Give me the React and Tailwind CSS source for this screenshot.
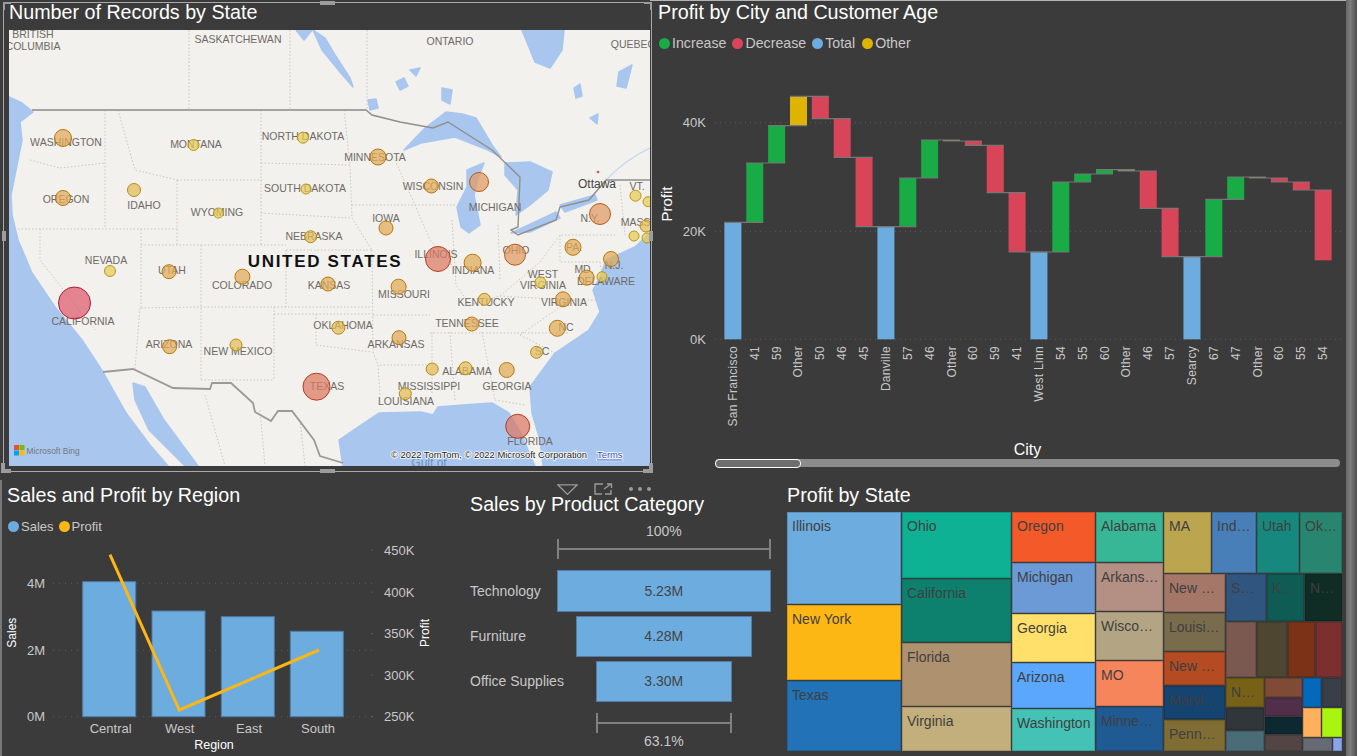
import React from 'react';

const waterfall = [
  ['San Francisco', 'total', 222.3],
  ['41', 'up', 163],
  ['59', 'up', 125.7],
  ['Other', 'other', 96.3],
  ['50', 'down', 118.7],
  ['46', 'down', 157.3],
  ['45', 'down', 226.7],
  ['Danville', 'total', 226.7],
  ['57', 'up', 178],
  ['46', 'up', 140],
  ['Other', 'tiny', 141],
  ['60', 'down', 145.3],
  ['59', 'down', 192.7],
  ['41', 'down', 252],
  ['West Linn', 'total', 252],
  ['54', 'up', 182],
  ['55', 'up', 174],
  ['60', 'up', 169.7],
  ['Other', 'tiny', 171],
  ['46', 'down', 208.3],
  ['57', 'down', 256.7],
  ['Searcy', 'total', 256.7],
  ['67', 'up', 199.3],
  ['47', 'up', 177],
  ['Other', 'tiny', 178],
  ['60', 'down', 182],
  ['55', 'down', 190],
  ['54', 'down', 260.3],
];

const barFill = {
  total: '#6cacdf',
  up: '#19ab45',
  down: '#d94558',
  other: '#dfb400',
  tiny: '#b5a45c',
};

const mapLabels = [
  ['BRITISH', 33, 34], ['COLUMBIA', 33, 46], ['SASKATCHEWAN', 238, 39], ['ONTARIO', 450, 41], ['QUEBEC', 633, 44],
  ['WASHINGTON', 66, 142], ['MONTANA', 196, 144], ['NORTH DAKOTA', 303, 136], ['MINNESOTA', 375, 157],
  ['WISCONSIN', 433, 186], ['MICHIGAN', 495, 207], ['VT.', 637, 186], ['N.Y.', 590, 218], ['MASS.', 637, 222],
  ['OREGON', 66, 199], ['IDAHO', 144, 205], ['WYOMING', 217, 212], ['SOUTH DAKOTA', 305, 188], ['IOWA', 386, 218],
  ['NEBRASKA', 314, 236], ['NEVADA', 106, 260], ['UTAH', 172, 270], ['COLORADO', 242, 285], ['KANSAS', 329, 285],
  ['MISSOURI', 404, 294], ['ILLINOIS', 436, 254], ['INDIANA', 473, 270], ['OHIO', 516, 250], ['PA.', 574, 247],
  ['N.J.', 614, 265], ['MD.', 584, 269], ['WEST', 543, 274], ['VIRGINIA', 543, 285], ['DELAWARE', 606, 281],
  ['KENTUCKY', 486, 302], ['VIRGINIA', 564, 302], ['CALIFORNIA', 83, 321], ['OKLAHOMA', 343, 325],
  ['TENNESSEE', 467, 323], ['NC', 566, 327], ['ARKANSAS', 396, 344], ['ARIZONA', 169, 344], ['NEW MEXICO', 238, 351],
  ['SC', 542, 351], ['ALABAMA', 467, 371], ['GEORGIA', 507, 386], ['MISSISSIPPI', 429, 386], ['TEXAS', 327, 386],
  ['LOUISIANA', 406, 401], ['FLORIDA', 530, 441],
];

const bubbles = [
  [63, 138, 8.5], [193.6, 145, 5.5], [303, 137.7, 5.5], [378, 157, 8], [431.4, 186, 7], [479, 182, 9.5],
  [600, 214, 10.5], [635.5, 195.7, 5.5], [648, 201.7, 5], [646, 226, 6], [634, 236, 5], [647, 238, 5],
  [63, 198, 7.5], [134, 190, 6.5], [218.4, 213, 5], [306, 189, 5], [386, 228, 7], [310.6, 236.7, 6],
  [110, 271, 5.5], [169, 271.7, 7], [242.4, 276.7, 7.5], [328, 284, 7], [398.6, 286.7, 7.5], [438, 259, 12.5],
  [472.6, 262.7, 8.5], [515, 254.7, 10.5], [573, 247.3, 8], [611, 259, 7.5], [540.4, 282.3, 5.5], [586.7, 277.7, 7.5],
  [602, 276.7, 5], [484.4, 299.3, 6], [563, 299.3, 7.5], [74.5, 303, 16], [338.4, 327.7, 6.5], [471.8, 324, 7],
  [557.3, 328.3, 8], [399, 337.7, 7], [236, 345, 6], [169.6, 346.7, 7], [536.6, 352.3, 6], [432.2, 369, 6],
  [465.5, 368.3, 6.5], [506.7, 370, 7.5], [316.5, 386.7, 13.5], [405.3, 393.7, 6], [517.7, 426.3, 12],
];

const bubbleColor = (r) => {
  if (r >= 15) return ['#dc5a6c', '#ae1a3a'];
  if (r >= 12) return ['#dd7a62', '#b43c1c'];
  if (r >= 9) return ['#e09a64', '#b65c12'];
  if (r >= 7) return ['#e2ab58', '#b5780c'];
  if (r >= 6) return ['#e2bc58', '#b98a12'];
  return ['#e6cb56', '#ba9814'];
};

const stateLines = [
  'M189 30V110', 'M290 30V110', 'M367 30V110', 'M105 110V229', 'M118 110L135 170L177 180', 'M30 160L60 168L105 163',
  'M18 229H177', 'M177 180H262', 'M177 180V245', 'M261 110V245', 'M261 163L350 165', 'M261 213L350 218', 'M344 110L350 165L352 218L372 250',
  'M141 229V308', 'M141 245H201', 'M201 245H286', 'M201 245V380', 'M286 250V307', 'M286 250H372', 'M141 308L201 307H372', 'M140 308L135 369',
  'M274 307V380', 'M201 380H274', 'M274 314H372', 'M316 314V345L372 352', 'M372 250L373 352', 'M352 205H415', 'M395 160L415 205L430 240L452 265',
  'M415 205H455', 'M452 220L456 285L470 305', 'M498 225L500 280', 'M373 315H430', 'M373 352L378 365L380 395', 'M380 365H428', 'M432 332V395',
  'M450 332L455 400', 'M482 332L495 400', 'M430 333H570', 'M470 305L500 296L540 262', 'M540 262L560 235H615', 'M500 296L570 300H600', 'M495 400L525 405',
  'M520 335L555 353', 'M570 300L520 335', 'M40 229L40 260L95 330', 'M560 235V262H600', 'M620 185L625 235', 'M600 262L604 285',
  'M205 395L225 466', 'M260 410L265 466', 'M300 420L305 466',
];

const mapWater = [
  '9,97 22,103 33,112 20,122 22,140 17,165 11,195 12,215 18,240 32,273 55,307 82,340 103,372 126,413 150,445 168,466 9,466',
  '133,383 145,387 164,420 198,466 185,466 149,430 135,400',
  '343,466 339,440 358,427 379,413 421,412 433,415 438,407 463,405 492,403 509,413 522,435 530,455 535,466',
  '543,466 540,440 532,413 530,387 555,353 589,330 600,312 593,290 600,277 606,260 635,247 650,233 650,466',
  '404,150 425,128 446,112 462,114 476,118 492,145 501,157 488,150 455,137 421,143',
  '467,170 484,163 478,178 474,195 480,225 469,233 461,227 457,207 467,187',
  '505,163 530,162 552,172 548,190 530,205 516,215 518,190 505,175',
  '511,233 535,222 556,212 560,218 530,232',
  '560,205 595,195 597,200 565,212',
  '313,30 325,38 335,55 350,78 353,87 340,72 322,50',
  '522,30 564,30 562,50 550,68 535,62',
  '442,88 452,90 450,104 442,100',
  '396,82 404,78 408,86 400,90',
  '410,70 420,68 416,76',
  '619,72 632,65 626,88 617,86',
  '296,30 312,30 304,40',
  '368,100 376,99 378,108 370,110',
  '590,118 598,114 597,124',
  '574,88 580,84 582,96 576,98',
];

const treeColumns = [
  {
    width: 'w-[114px]',
    cells: [
      { label: 'Illinois', c: 'h-[92px] bg-[#6cacdf]' },
      { label: 'New York', c: 'h-[75px] bg-[#fdb714]' },
      { label: 'Texas', c: 'h-[70px] bg-[#2272b8]' },
    ],
  },
  {
    width: 'w-[109px]',
    cells: [
      { label: 'Ohio', c: 'h-[66px] bg-[#0eb194]' },
      { label: 'California', c: 'h-[63px] bg-[#0e806e]' },
      { label: 'Florida', c: 'h-[63px] bg-[#ae916f]' },
      { label: 'Virginia', c: 'h-[44px] bg-[#c2af7c]' },
    ],
  },
  {
    width: 'w-[83px]',
    cells: [
      { label: 'Oregon', c: 'h-[50px] bg-[#f4592a]' },
      { label: 'Michigan', c: 'h-[50px] bg-[#6b9ad6]' },
      { label: 'Georgia', c: 'h-[48px] bg-[#ffe06a]' },
      { label: 'Arizona', c: 'h-[45px] bg-[#5ba7fe]' },
      { label: 'Washington', c: 'h-[42px] bg-[#44c2b5]' },
    ],
  },
  {
    width: 'w-[67px]',
    cells: [
      { label: 'Alabama', c: 'h-[50px] bg-[#37b796]' },
      { label: 'Arkans…', c: 'h-[48px] bg-[#b38f84]' },
      { label: 'Wisco…', c: 'h-[48px] bg-[#b3a583]' },
      { label: 'MO', c: 'h-[45px] bg-[#f6855c]' },
      { label: 'Minne…', c: 'h-[44px] bg-[#1f5a93]' },
    ],
  },
];

const TreeCell = ({ label, c }) => (
  <div className={`border border-black/15 pl-[4px] pt-[4px] text-[14px] leading-[18px] text-[#3f3f3f] overflow-hidden whitespace-nowrap ${c}`}>
    {label}
  </div>
);

const Title = ({ children, className = '' }) => (
  <div className={`text-[19.7px] text-white whitespace-nowrap ${className}`}>{children}</div>
);

const LegendItem = ({ color, label, className = '' }) => (
  <div className={`flex items-center gap-[2px] ${className}`}>
    <span className={`w-[11px] h-[11px] rounded-full ${color}`} />
    <span>{label}</span>
  </div>
);

const Handle = ({ className }) => <div className={`absolute bg-[#9c9c9c] ${className}`} />;

const MapChart = () => (
  <svg width="641" height="436" viewBox="9 30 641 436" className="block">
    <rect x="9" y="30" width="641" height="436" fill="#f2f1ed" />
    {mapWater.map((pts) => (
      <polygon key={pts} points={pts} fill="#a9c6ef" stroke="#a9c6ef" strokeWidth="1.5" strokeLinejoin="round" />
    ))}
    <path d="M606 180C620 165 635 155 650 148" stroke="#c6d6ee" strokeWidth="1.2" fill="none" />
    {stateLines.map((d) => (
      <path key={d} d={d} stroke="#c9c7c1" strokeWidth="1" strokeDasharray="1.5 2" fill="none" />
    ))}
    <path d="M32 110H366L372 115L400 122L433 128L448 122L492 150L520 177L518 227L511 230L518 235L556 220L560 207L589 200L606 180H650" stroke="#8f8f8d" strokeWidth="1.4" fill="none" />
    <path d="M32 110H366" stroke="#a3a3a1" strokeWidth="2" fill="none" />
    <path d="M103 372L133 369L173 388L210 389L212 383L231 383L253 403L255 412L271 421L278 411L292 411L314 440L320 456L343 463" stroke="#9a9a97" strokeWidth="1.8" fill="none" />
    {mapLabels.map(([text, x, y]) => (
      <text key={`${text}-${x}`} x={x} y={y} textAnchor="middle" dominantBaseline="central" className="fill-[#6f6a67] text-[10.5px]">
        {text}
      </text>
    ))}
    <text x="597" y="184" textAnchor="middle" dominantBaseline="central" className="fill-[#444444] text-[12px]">Ottawa</text>
    <circle cx="598" cy="172" r="1.3" fill="#e0503c" />
    <text x="429" y="463" textAnchor="middle" dominantBaseline="central" className="fill-[#6f8fc0] text-[12px]">Gulf of</text>
    <text x="325" y="261" textAnchor="middle" dominantBaseline="central" className="fill-[#111111] text-[17px] font-bold tracking-[1.7px]">UNITED STATES</text>
    {bubbles.map(([cx, cy, r]) => {
      const [fill, stroke] = bubbleColor(r);
      return <circle key={`${cx}-${cy}`} cx={cx} cy={cy} r={r} fill={fill} fillOpacity="0.72" stroke={stroke} strokeWidth="1" />;
    })}
    <rect x="14" y="445" width="5" height="5" fill="#f25022" />
    <rect x="19.5" y="445" width="5" height="5" fill="#7fba00" />
    <rect x="14" y="450.5" width="5" height="5" fill="#00a4ef" />
    <rect x="19.5" y="450.5" width="5" height="5" fill="#ffb900" />
    <text x="26.5" y="450.5" dominantBaseline="central" className="fill-[#777777] text-[8.4px]">Microsoft Bing</text>
    <text x="391" y="454" dominantBaseline="central" stroke="#ffffff" strokeWidth="1.5" paintOrder="stroke" className="fill-[#222222] text-[9.4px]">
      © 2022 TomTom, © 2022 Microsoft Corporation
    </text>
    <text x="597" y="454" dominantBaseline="central" stroke="#ffffff" strokeWidth="1.5" paintOrder="stroke" className="fill-[#2f4fc0] text-[9.4px] underline">
      Terms
    </text>
  </svg>
);

const WaterfallChart = () => {
  const barX = (i) => 724.4 + i * 21.86;
  return (
    <svg width="702" height="384" viewBox="655 56 702 384" className="block">
      {[[122.7, '40K'], [231.3, '20K'], [339.3, '0K']].map(([y, t]) => (
        <g key={t}>
          <line x1="715" x2="1342" y1={y} y2={y} stroke="#5c5c5c" strokeDasharray="1 4" />
          <text x="706" y={y} textAnchor="end" dominantBaseline="central" className="fill-[#c8c8c8] text-[13px]">{t}</text>
        </g>
      ))}
      {waterfall.map(([, kind, end], i) => {
        const start = kind === 'total' ? 339.3 : waterfall[i - 1][2];
        return (
          <rect key={i} x={barX(i)} y={Math.min(start, end)} width="17" height={Math.abs(start - end)} fill={barFill[kind]} />
        );
      })}
      {waterfall.slice(0, -1).map(([, , end], i) => (
        <line key={i} x1={barX(i)} x2={barX(i + 1) + 17} y1={end} y2={end} stroke="#777777" strokeWidth="1.2" />
      ))}
      {waterfall.map(([label], i) => {
        const cx = barX(i) + 8.5;
        return (
          <text key={i} x={cx} y="346" transform={`rotate(-90 ${cx} 346)`} textAnchor="end" dominantBaseline="central" className="fill-[#c8c8c8] text-[12px] tracking-[0.3px]">
            {label}
          </text>
        );
      })}
      <text x="666" y="204" transform="rotate(-90 666 204)" textAnchor="middle" dominantBaseline="central" className="fill-white text-[15px]">Profit</text>
    </svg>
  );
};

const ComboChart = () => (
  <svg width="460" height="220" viewBox="0 536 460 220" className="block">
    {[583.3, 650.3, 716.7].map((y) => (
      <line key={y} x1="53" x2="372" y1={y} y2={y} stroke="#5c5c5c" strokeDasharray="1 5" />
    ))}
    {[['4M', 583.3], ['2M', 650.3], ['0M', 716.7]].map(([t, y]) => (
      <text key={t} x="45" y={y} textAnchor="end" dominantBaseline="central" className="fill-[#c8c8c8] text-[13px]">{t}</text>
    ))}
    {[['450K', 550], ['400K', 592], ['350K', 633.7], ['300K', 675], ['250K', 716.7]].map(([t, y]) => (
      <g key={t}>
        <circle cx="372" cy={y} r="0.6" fill="#777777" />
        <text x="384" y={y} dominantBaseline="central" className="fill-[#c8c8c8] text-[13px]">{t}</text>
      </g>
    ))}
    {[[82.7, 581.7], [152, 611], [221.3, 616.7], [290.3, 631.3]].map(([x, y]) => (
      <rect key={x} x={x} y={y} width="53" height={716.7 - y} fill="#6cacdf" stroke="#4f7da5" />
    ))}
    <polyline points="110,554.7 179.3,710 319,650" fill="none" stroke="#fdb714" strokeWidth="3" />
    {[['Central', 110.7], ['West', 179.7], ['East', 249], ['South', 318]].map(([t, x]) => (
      <text key={t} x={x} y="728" textAnchor="middle" dominantBaseline="central" className="fill-[#c8c8c8] text-[13px]">{t}</text>
    ))}
    <text x="214" y="744.5" textAnchor="middle" dominantBaseline="central" className="fill-white text-[12.5px]">Region</text>
    <text x="12.5" y="632.7" transform="rotate(-90 12.5 632.7)" textAnchor="middle" dominantBaseline="central" className="fill-white text-[12px]">Sales</text>
    <text x="425" y="633" transform="rotate(-90 425 633)" textAnchor="middle" dominantBaseline="central" className="fill-white text-[12px]">Profit</text>
  </svg>
);

const FunnelRow = ({ label, value, bar }) => (
  <div className="flex items-stretch">
    <div className="w-[86.7px] flex items-center text-[14px] text-[#c8c8c8] whitespace-nowrap">{label}</div>
    <div className="w-[214.3px] flex justify-center">
      <div className={`flex items-center justify-center border border-[#4f7da5] bg-[#6cacdf] text-[14px] text-[#444444] ${bar}`}>{value}</div>
    </div>
  </div>
);

const Bracket = ({ className }) => (
  <div className={`h-[20px] flex items-center border-x-2 border-[#808080] ${className}`}>
    <div className="h-[2px] w-full bg-[#808080]" />
  </div>
);

const SliceCell = ({ w, h, bg, label }) => (
  <div className={`${w} ${h} ${bg} border border-black/15 pl-[4px] pt-[4px] text-[14px] leading-[18px] text-[#3f3f3f] overflow-hidden whitespace-nowrap`}>
    {label}
  </div>
);

const Treemap = () => (
  <div className="flex gap-px h-[239px] w-[555px] ml-[7px]">
    {treeColumns.map((col) => (
      <div key={col.width} className={`flex flex-col gap-px ${col.width}`}>
        {col.cells.map((cell) => (
          <TreeCell key={cell.label} {...cell} />
        ))}
      </div>
    ))}
    <div className="w-[178px] flex flex-col gap-px">
      <div className="flex gap-px h-[61px]">
        <SliceCell w="w-[47px]" h="h-[61px]" bg="bg-[#bba64f]" label="MA" />
        <SliceCell w="w-[44px]" h="h-[61px]" bg="bg-[#487fb8]" label="Ind…" />
        <SliceCell w="w-[42px]" h="h-[61px]" bg="bg-[#17887d]" label="Utah" />
        <SliceCell w="w-[42px]" h="h-[61px]" bg="bg-[#288670]" label="Ok…" />
      </div>
      <div className="flex gap-px h-[177px]">
        <div className="w-[61px] flex flex-col gap-px">
          <SliceCell w="w-full" h="h-[38px]" bg="bg-[#a57768]" label="New …" />
          <SliceCell w="w-full" h="h-[38px]" bg="bg-[#796c4d]" label="Louisi…" />
          <SliceCell w="w-full" h="h-[33px]" bg="bg-[#b54b22]" label="New …" />
          <SliceCell w="w-full" h="h-[33px]" bg="bg-[#14446f]" label="Maryl…" />
          <SliceCell w="w-full" h="h-[31px]" bg="bg-[#7f6d34]" label="Penn…" />
        </div>
        <div className="w-[116px] flex flex-col gap-px">
          <div className="flex gap-px h-[47px]">
            <SliceCell w="w-[40px]" h="h-[47px]" bg="bg-[#305680]" label="S…" />
            <SliceCell w="w-[37px]" h="h-[47px]" bg="bg-[#0f5c54]" label="K…" />
            <SliceCell w="w-[37px]" h="h-[47px]" bg="bg-[#0f2c25]" label="N…" />
          </div>
          <div className="flex gap-px h-[55px]">
            <SliceCell w="w-[30px]" h="h-[55px]" bg="bg-[#7a5a50]" />
            <SliceCell w="w-[30px]" h="h-[55px]" bg="bg-[#4e4631]" />
            <SliceCell w="w-[27px]" h="h-[55px]" bg="bg-[#7a3316]" />
            <SliceCell w="w-[26px]" h="h-[55px]" bg="bg-[#7c2f2f]" />
          </div>
          <div className="flex gap-px h-[73px]">
            <div className="w-[38px] flex flex-col gap-px">
              <SliceCell w="w-full" h="h-[29px]" bg="bg-[#766117]" label="N…" />
              <SliceCell w="w-full" h="h-[22px]" bg="bg-[#30363a]" />
              <SliceCell w="w-full" h="h-[20px]" bg="bg-[#4a6c77]" />
            </div>
            <div className="w-[37px] flex flex-col gap-px">
              <SliceCell w="w-full" h="h-[19px]" bg="bg-[#7f4a36]" />
              <SliceCell w="w-full" h="h-[18px]" bg="bg-[#512f4a]" />
              <SliceCell w="w-full" h="h-[17px]" bg="bg-[#0c2830]" />
              <SliceCell w="w-full" h="h-[16px]" bg="bg-[#544545]" />
            </div>
            <div className="w-[39px] flex flex-col gap-px">
              <div className="flex gap-px h-[29px]">
                <SliceCell w="w-[18px]" h="h-[29px]" bg="bg-[#0468bb]" />
                <SliceCell w="w-[20px]" h="h-[29px]" bg="bg-[#393e48]" />
              </div>
              <div className="flex gap-px h-[29px]">
                <SliceCell w="w-[18px]" h="h-[29px]" bg="bg-[#ffb05c]" />
                <SliceCell w="w-[20px]" h="h-[29px]" bg="bg-[#a9f50f]" />
              </div>
              <div className="flex gap-px h-[13px]">
                <SliceCell w="w-[29px]" h="h-[13px]" bg="bg-[#666a73]" />
                <SliceCell w="w-[9px]" h="h-[13px]" bg="bg-[#89a4ea]" />
              </div>
            </div>
          </div>
        </div>
      </div>
    </div>
  </div>
);

const App = () => (
  <div className="relative w-[1357px] h-[756px] overflow-hidden bg-[#3b3b3b] font-['Liberation_Sans',Arial,sans-serif]">
    <div className="flex h-[480px]">
      {/* map visual, selected */}
      <div className="w-[655px] pl-[3px] pt-[2px]">
        <div className="relative w-[649px] h-[470px] border border-[#a9a9a9] pl-[5px]">
          <Handle className="left-[-1px] top-[-1px] w-[8px] h-[2px]" />
          <Handle className="left-[-1px] top-[-1px] w-[2px] h-[8px]" />
          <Handle className="right-[-1px] top-[-1px] w-[8px] h-[2px]" />
          <Handle className="right-[-1px] top-[-1px] w-[2px] h-[8px]" />
          <Handle className="left-[-3px] bottom-[-2px] w-[10px] h-[4px]" />
          <Handle className="left-[-3px] bottom-[-2px] w-[4px] h-[10px]" />
          <Handle className="right-[-2px] bottom-[-2px] w-[10px] h-[4px]" />
          <Handle className="right-[-2px] bottom-[-2px] w-[4px] h-[10px]" />
          <Handle className="left-[316px] top-[-2px] w-[15px] h-[4px]" />
          <Handle className="left-[316px] bottom-[-2px] w-[15px] h-[4px]" />
          <Handle className="left-[-2px] top-[228px] w-[4px] h-[10px]" />
          <Handle className="right-[-2px] top-[228px] w-[4px] h-[10px]" />
          <Title className="h-[27px] leading-[18px]">Number of Records by State</Title>
          <MapChart />
        </div>
      </div>

      {/* waterfall */}
      <div className="w-[702px]">
        <Title className="h-[30px] leading-[24px] pl-[3px]">Profit by City and Customer Age</Title>
        <div className="flex h-[26px] items-center pl-[4px] pt-[2px] text-[14.2px] text-[#c8c8c8]">
          <LegendItem color="bg-[#19ab45]" label="Increase" className="mr-[6px]" />
          <LegendItem color="bg-[#d94558]" label="Decrease" className="mr-[6px]" />
          <LegendItem color="bg-[#6cacdf]" label="Total" className="mr-[7px]" />
          <LegendItem color="bg-[#dfb400]" label="Other" />
        </div>
        <WaterfallChart />
        <div className="w-[745px] h-[19px] text-center text-[16px] leading-[19px] text-white">City</div>
        <div className="ml-[60px] w-[625px] h-[8px] rounded-[4px] bg-[#8c8c8c]">
          <div className="w-[86px] h-[9px] rounded-[4px] border border-white bg-[#6e6e6e]" />
        </div>
      </div>
    </div>

    <div className="flex h-[276px]">
      <div className="w-[460px] border-l-2 border-[#777777]">
        <Title className="h-[37px] leading-[24px] pl-[5px] pt-[3px]">Sales and Profit by Region</Title>
        <div className="flex h-[19px] items-center pl-[6px] text-[13px] text-[#c8c8c8]">
          <LegendItem color="bg-[#6cacdf]" label="Sales" className="mr-[5px]" />
          <LegendItem color="bg-[#fdb714]" label="Profit" />
        </div>
        <div className="-ml-[2px]">
          <ComboChart />
        </div>
      </div>

      <div className="relative w-[320px] pl-[10px] pt-[12px]">
        {/* hover toolbar on the visual */}
        <div className="absolute left-[97px] top-[3px] flex items-center">
          <svg width="21" height="11" viewBox="0 0 21 11" fill="none" stroke="#9a9a9a" strokeWidth="1.3"><path d="M0.8 0.8H20.2L10.5 10.4Z" /></svg>
          <svg width="19" height="12" viewBox="0 0 19 12" fill="none" stroke="#9a9a9a" strokeWidth="1.4" className="ml-[16px]"><path d="M9 1H1V11H8M11 11H17V7M10 6L17 1M13 1H17.5V5" /></svg>
          <div className="ml-[16px] flex gap-[5px]">
            <span className="w-[4px] h-[4px] rounded-full bg-[#9a9a9a]" />
            <span className="w-[4px] h-[4px] rounded-full bg-[#9a9a9a]" />
            <span className="w-[4px] h-[4px] rounded-full bg-[#9a9a9a]" />
          </div>
        </div>
        <Title className="leading-[24px]">Sales by Product Category</Title>
        <div className="mt-[7px] ml-[86.7px] w-[214.3px]">
          <div className="h-[16px] text-center text-[14px] leading-[16px] text-[#c8c8c8]">100%</div>
          <Bracket />
        </div>
        <div className="mt-[11px] flex flex-col gap-[4px]">
          <FunnelRow label="Technology" value="5.23M" bar="w-[214.3px] h-[42px]" />
          <FunnelRow label="Furniture" value="4.28M" bar="w-[175.7px] h-[41px]" />
          <FunnelRow label="Office Supplies" value="3.30M" bar="w-[135.7px] h-[41px]" />
        </div>
        <div className="mt-[11px] ml-[86.7px] w-[214.3px] flex flex-col items-center">
          <Bracket className="w-[135.7px]" />
          <div className="h-[16px] text-[14px] leading-[16px] text-[#c8c8c8]">63.1%</div>
        </div>
      </div>

      <div className="flex-1 pt-[3px]">
        <Title className="h-[29px] leading-[24px] pl-[7px]">Profit by State</Title>
        <Treemap />
      </div>
    </div>

    {/* page scrollbar edge and top hairline */}
    <div className="absolute left-[650px] right-0 top-0 h-px bg-[#b5b5b5]" />
    <div className="absolute right-0 top-0 bottom-0 w-[11px] bg-linear-to-r from-[#666666] via-[#7e7e7e] via-40% to-[#4c4c4c]" />
  </div>
);

export default App;
